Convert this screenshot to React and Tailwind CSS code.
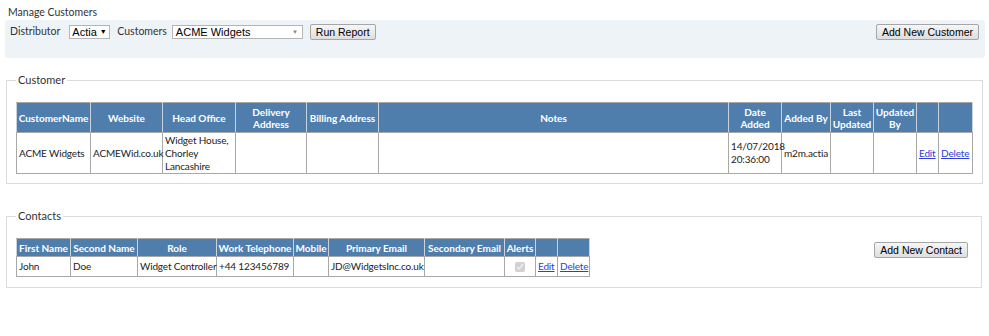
import React from 'react';

const font = { fontFamily: 'Lato, "Noto Sans", sans-serif' };
const arial = { fontFamily: '"Liberation Sans", Arial, sans-serif' };

const customerCols = [
  { label: 'CustomerName', w: 74 },
  { label: 'Website', w: 72 },
  { label: 'Head Office', w: 73 },
  { label: 'Delivery Address', w: 71 },
  { label: 'Billing Address', w: 72 },
  { label: 'Notes', w: 350 },
  { label: 'Date Added', w: 53 },
  { label: 'Added By', w: 49 },
  { label: 'Last Updated', w: 43 },
  { label: 'Updated By', w: 43 },
  { label: '', w: 22 },
  { label: '', w: 34 },
];

const contactCols = [
  { label: 'First Name', w: 54 },
  { label: 'Second Name', w: 67 },
  { label: 'Role', w: 79 },
  { label: 'Work Telephone', w: 77 },
  { label: 'Mobile', w: 35 },
  { label: 'Primary Email', w: 96 },
  { label: 'Secondary Email', w: 80 },
  { label: 'Alerts', w: 31 },
  { label: '', w: 22 },
  { label: '', w: 32 },
];

const Button = ({ children }) => (
  <button
    className="h-4 px-[5px] border border-[#a6a6a6] rounded-[2px] bg-gradient-to-b from-[#f6f6f6] to-[#dedede] text-[10.5px] leading-[14px] text-black whitespace-nowrap"
    style={arial}
  >
    {children}
  </button>
);

const Th = ({ children }) => (
  <th className="border border-[#a8a8a8] border-x-[#c8d3de] px-[1px] font-bold text-white text-center leading-[12px] text-[10px]">
    {children}
  </th>
);

const Td = ({ children, className = '' }) => (
  <td className={'border border-[#a8a8a8] px-[2px] text-[10px] leading-[13px] text-[#222] whitespace-nowrap tracking-[-0.15px] ' + className}>
    {children}
  </td>
);

const Link = ({ children }) => (
  <a href="#" className="text-[#2c3ed6] underline">
    {children}
  </a>
);

const Fieldset = ({ legend, className = '', children }) => (
  <fieldset className={'border border-[#dcdcdc] mx-[6px] pl-[9px] pr-[9px] ' + className}>
    <legend className="px-[2px] text-[11px] leading-[14px] text-[#333]">{legend}</legend>
    {children}
  </fieldset>
);

export default function App() {
  return (
    <div className="w-[989px] h-[336px] bg-white text-[#333]" style={font}>
      <div className="pl-[8px] pt-[4px] text-[10.5px] leading-[16px] text-[#333]">Manage Customers</div>

      <div className="mx-[5px] w-[980px] h-[38px] bg-[#edf3f7] rounded-[3px] pt-[4px] pl-[5px] pr-[6px] flex items-start">
        <div className="flex items-center h-4 text-[10.5px]">
          <span>Distributor</span>
          <div
            className="ml-[9px] h-[14px] w-[41px] flex items-center border border-[#b5b5b5] bg-white px-[2px] gap-[3px] text-[11px] text-black"
            style={arial}
          >
            Actia <span className="text-[7px]">▼</span>
          </div>
          <span className="ml-[7px]">Customers</span>
          <div
            className="ml-[5px] h-[14px] w-[131px] flex items-center justify-between border border-[#b5b5b5] bg-white pl-[3px] pr-[4px] text-[11px] text-black"
            style={arial}
          >
            <span>ACME Widgets</span>
            <span className="text-[6px] text-[#888]">▼</span>
          </div>
          <div className="ml-[7px] flex">
            <Button>Run Report</Button>
          </div>
        </div>
        <div className="ml-auto flex">
          <Button>Add New Customer</Button>
        </div>
      </div>

      <div className="h-[15px]" />

      <Fieldset legend="Customer" className="w-[977px] pt-[15px] pb-[9px]">
        <table className="table-fixed border-collapse w-[956px] border border-[#a8a8a8]">
          <colgroup>
            {customerCols.map((c, i) => (
              <col key={i} style={{ width: c.w }} />
            ))}
          </colgroup>
          <thead>
            <tr className="bg-[#507eac] h-[30px]">
              {customerCols.map((c, i) => (
                <Th key={i}>{c.label}</Th>
              ))}
            </tr>
          </thead>
          <tbody>
            <tr className="h-[41px]">
              <Td>ACME Widgets</Td>
              <Td>ACMEWid.co.uk</Td>
              <Td>
                Widget House,
                <br />
                Chorley
                <br />
                Lancashire
              </Td>
              <Td />
              <Td />
              <Td />
              <Td>
                14/07/2018
                <br />
                20:36:00
              </Td>
              <Td>m2m.actia</Td>
              <Td />
              <Td />
              <Td>
                <Link>Edit</Link>
              </Td>
              <Td>
                <Link>Delete</Link>
              </Td>
            </tr>
          </tbody>
        </table>
      </Fieldset>

      <div className="h-[25px]" />

      <Fieldset legend="Contacts" className="w-[976px] pt-[15px] pb-[10px]">
        <div className="flex items-start">
          <table className="table-fixed border-collapse w-[573px] border border-[#a8a8a8]">
            <colgroup>
              {contactCols.map((c, i) => (
                <col key={i} style={{ width: c.w }} />
              ))}
            </colgroup>
            <thead>
              <tr className="bg-[#507eac] h-[18px]">
                {contactCols.map((c, i) => (
                  <Th key={i}>{c.label}</Th>
                ))}
              </tr>
            </thead>
            <tbody>
              <tr className="h-[20px]">
                <Td>John</Td>
                <Td>Doe</Td>
                <Td>Widget Controller</Td>
                <Td>+44 123456789</Td>
                <Td />
                <Td>JD@WidgetsInc.co.uk</Td>
                <Td />
                <Td className="text-center">
                  <input type="checkbox" checked disabled readOnly className="w-[10px] h-[10px] align-middle" />
                </Td>
                <Td>
                  <Link>Edit</Link>
                </Td>
                <Td>
                  <Link>Delete</Link>
                </Td>
              </tr>
            </tbody>
          </table>
          <div className="ml-auto mr-[4px] mt-[4px] flex">
            <Button>Add New Contact</Button>
          </div>
        </div>
      </Fieldset>
    </div>
  );
}
